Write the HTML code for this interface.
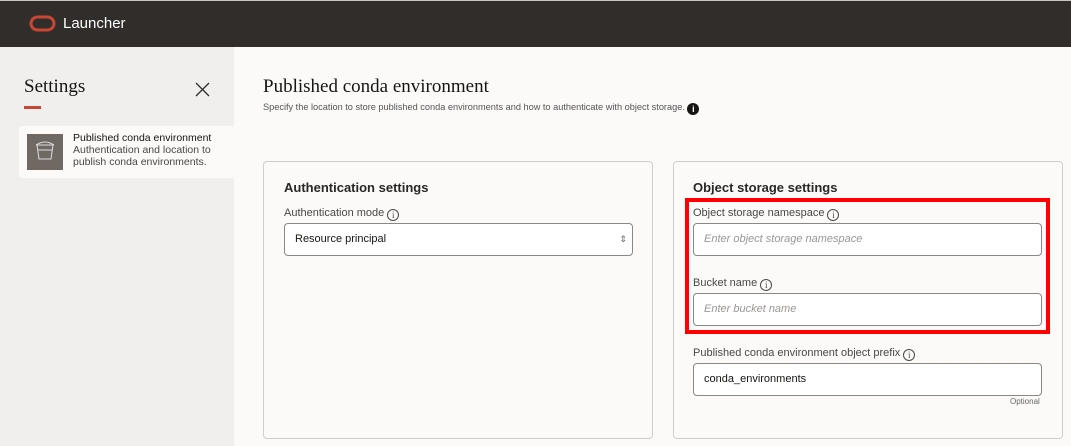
<!DOCTYPE html>
<html><head><meta charset="utf-8"><style>
*{box-sizing:border-box;margin:0;padding:0}
body{width:1071px;height:446px;overflow:hidden;background:#fbfaf9;font-family:"Liberation Sans",sans-serif;position:relative;color:#161513}
.hdr{position:absolute;left:0;top:0;width:1071px;height:47px;background:#312d2a;border-top:1px solid #c8c6c4}
.hdr .t{position:absolute;left:63px;top:14px;color:#fff;font-size:15px}
.side{position:absolute;left:0;top:47px;width:234px;height:399px;background:#f1efed}
.abs{position:absolute}
.ser{font-family:"Liberation Serif",serif}
.lbl{position:absolute;font-size:11px;color:#4a4744}
.info{display:inline-block;width:12px;height:12px;border:1px solid #4a4744;border-radius:50%;font-size:9px;text-align:center;line-height:10px;vertical-align:-2px;margin-left:3px;font-family:"Liberation Serif",serif}
.inp{position:absolute;height:33px;border:1px solid #8a8785;border-radius:4px;background:#fff;font-size:11px;padding:0 10px;line-height:31px}
.ph{color:#9a9795;font-style:italic}
.card{position:absolute;border:1px solid #d0cecc;border-radius:4px;background:#fbfaf9}
.ct{position:absolute;font-size:13px;font-weight:bold;color:#2a2725}
</style></head><body>
<div class="hdr"><svg class="abs" style="left:29px;top:14px" width="28" height="19"><rect x="2" y="2" width="23" height="13" rx="6.5" fill="none" stroke="#c74634" stroke-width="3"/></svg><div class="t">Launcher</div></div>
<div class="side">
<div class="abs ser" style="left:24px;top:29px;font-size:19px;color:#161513">Settings</div>
<div class="abs" style="left:24px;top:59px;width:17px;height:3px;background:#c74634"></div>
<svg class="abs" style="left:195px;top:35px" width="15" height="15"><path d="M1 1L14 14M14 1L1 14" stroke="#333" stroke-width="1.4"/></svg>
<div class="abs" style="left:19px;top:79px;width:215px;height:52px;background:#fbfaf9;border-radius:3px"></div>
<div class="abs" style="left:27px;top:87px;width:36px;height:36px;background:#6f6863"></div>
<svg class="abs" style="left:33px;top:93px" width="24" height="24"><path d="M3 5Q12 -1 21 5M3 5H21M4 5L6 19H18L20 5M4.5 10H19.5" stroke="#ddd" stroke-width="1" fill="none"/></svg>
<div class="abs" style="left:73px;top:85px;font-size:10.5px;line-height:12px;color:#4a4744"><span style="color:#161513">Published conda environment</span><br>Authentication and location to<br>publish conda environments.</div>
</div>
<div class="abs ser" style="left:263px;top:76px;font-size:19px">Published conda environment</div>
<div class="abs" style="left:263px;top:102px;font-size:9.2px;color:#555">Specify the location to store published conda environments and how to authenticate with object storage. <span style="display:inline-block;width:12px;height:12px;border-radius:50%;background:#161513;color:#fff;font-size:9px;text-align:center;line-height:12px;font-weight:bold;vertical-align:-2px">i</span></div>
<div class="card" style="left:263px;top:161px;width:390px;height:278px"></div>
<div class="card" style="left:673px;top:161px;width:390px;height:278px"></div>
<div class="ct" style="left:284px;top:180px">Authentication settings</div>
<div class="lbl" style="left:284px;top:207px">Authentication mode<span class="info">i</span></div>
<div class="inp" style="left:284px;top:223px;width:349px">Resource principal<span style="position:absolute;right:5px;top:0;font-size:9px;color:#666">⇕</span></div>
<div class="ct" style="left:693px;top:180px">Object storage settings</div>
<div class="abs" style="left:685px;top:198px;width:365px;height:136px;border:4px solid #f00"></div>
<div class="lbl" style="left:693px;top:207px">Object storage namespace<span class="info">i</span></div>
<div class="inp" style="left:693px;top:223px;width:349px"><span class="ph">Enter object storage namespace</span></div>
<div class="lbl" style="left:693px;top:277px">Bucket name<span class="info">i</span></div>
<div class="inp" style="left:693px;top:293px;width:349px"><span class="ph">Enter bucket name</span></div>
<div class="lbl" style="left:693px;top:347px">Published conda environment object prefix<span class="info">i</span></div>
<div class="inp" style="left:693px;top:363px;width:349px">conda_environments</div>
<div class="abs" style="left:1010px;top:397px;font-size:8px;color:#666">Optional</div>
</body></html>
